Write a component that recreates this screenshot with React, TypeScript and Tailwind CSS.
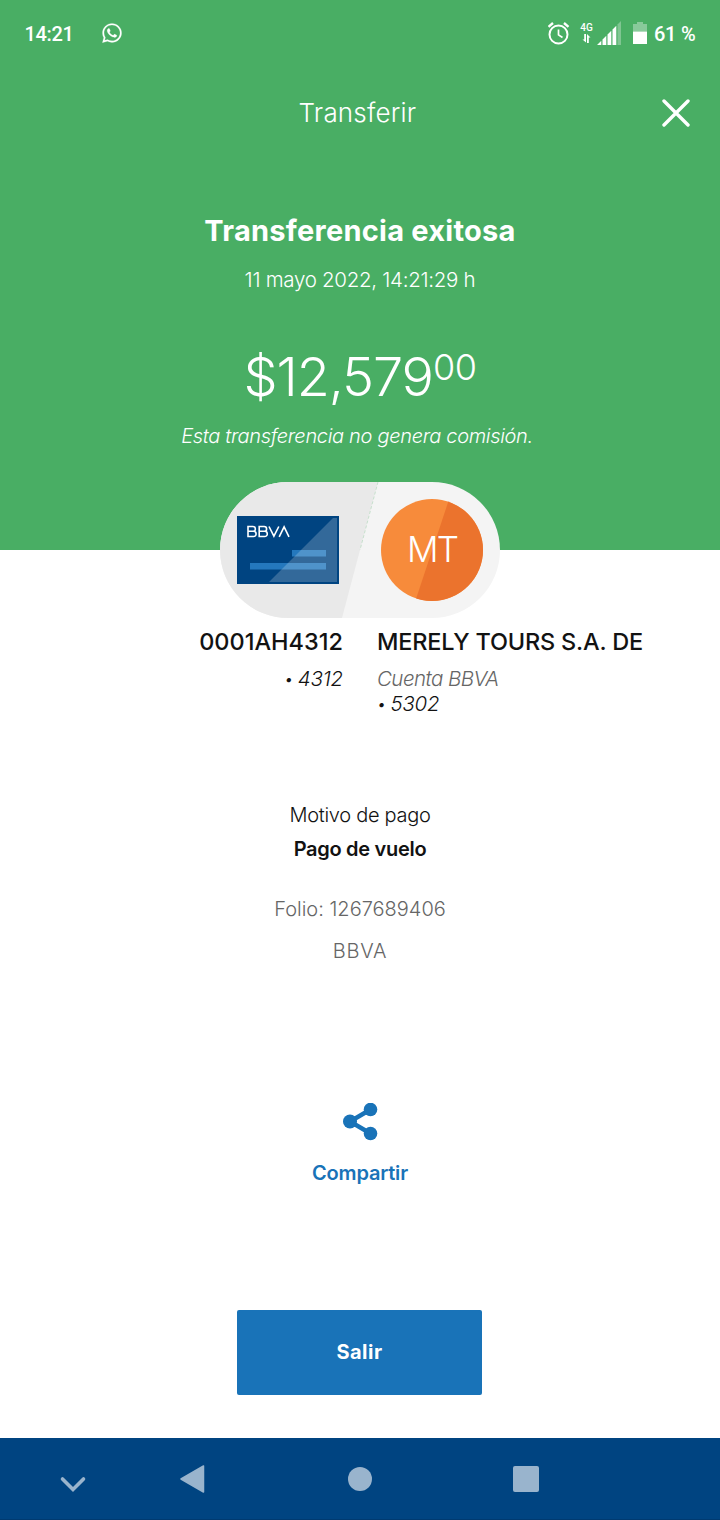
import { FC } from 'react';
import { FaWhatsapp } from 'react-icons/fa';

const StatusBar: FC = () => (
  <div className="flex h-[68px] items-center justify-between pr-[25px] pl-[24px] font-[Roboto,sans-serif] text-[20px] font-medium">
    <div className="flex items-center gap-[28px]">
      <span className="w-[50px] tracking-[-0.3px] whitespace-nowrap">14:21</span>
      <FaWhatsapp className="h-[22px] w-[20px] -translate-y-px stroke-current stroke-[4]" />
    </div>
    <div className="flex items-center">
      <svg className="h-[24px] w-[22px]" viewBox="0 0 22 24" fill="none" stroke="currentColor">
        <circle cx="10.500" cy="12.500" r="9" strokeWidth="2" />
        <path d="M10.500 7.500v5.400l4 2.600" strokeWidth="1.700" />
        <path d="M0.500 4.800 5 1M20.500 4.800 16 1" strokeWidth="2.400" />
      </svg>
      <div className="ml-[10px] flex w-[13px] -translate-y-[2px] flex-col items-center">
        <span className="text-[10px] leading-[12px] font-medium">4G</span>
        <svg className="h-[9px] w-[9px]" viewBox="0 0 9 9" fill="currentColor">
          <path d="M2.200 0H4v8.500L0.500 5.500h1.700zM5 0l3.500 3.500H6.800V9H5z" />
        </svg>
      </div>
      <svg className="ml-[4px] h-[24px] w-[24px] -translate-y-px" viewBox="0 0 24 24" fill="currentColor">
        <path d="M0 24 4.300 19.700V24zM5.500 18.500 9.300 14.700V24H5.500zM10.500 13.500l3.800-3.800V24h-3.800zM15.500 8.500l3.800-3.800V24h-3.800z" />
        <path d="M20.500 3.500 24 0v24h-3.500z" opacity="0.3" />
      </svg>
      <svg className="ml-[12px] h-[22px] w-[14px] -translate-y-px" viewBox="0 0 14 22" fill="currentColor">
        <path d="M4 0h6v2h4v7.500H0V2h4z" opacity="0.35" />
        <path d="M0 9.500h14V22H0z" />
      </svg>
      <span className="ml-[7px] w-[41px] tracking-[-0.25px] whitespace-nowrap">61 %</span>
    </div>
  </div>
);

const AccountsBadge: FC = () => (
  <svg className="mx-auto h-[136px] w-[280px]" viewBox="0 0 280 136">
    <defs>
      <clipPath id="pill">
        <rect width="280" height="136" rx="68" />
      </clipPath>
      <clipPath id="avatar">
        <circle cx="212" cy="68" r="51" />
      </clipPath>
    </defs>
    <g clipPath="url(#pill)">
      <path d="M0 0h280v136H0z" fill="#f4f4f4" />
      <path d="M0 0h158L122 136H0z" fill="#e9e9e9" />
      <path d="M158 0 140 68" stroke="#bcdcc4" strokeWidth="0.8" strokeDasharray="3 2" />
    </g>
    <path d="M17 34h102v68H17z" fill="#004481" />
    <path d="M72 68h34v6.500H72zM30 81h76v6.500H30z" fill="#2478bd" />
    <path d="M117 36v64H49l64-64z" fill="#fff" opacity="0.2" />
    <path
      d="M28 44.500v10h5.500a2.600 2.600 0 0 0 0-5.200H28h5a2.400 2.400 0 0 0 0-4.800zM39.200 44.500v10h5.500a2.600 2.600 0 0 0 0-5.200h-5.500h5a2.400 2.400 0 0 0 0-4.800zM49 44.500l4.900 9.700 4.900-9.700M59.200 54.800l4.900-9.900 4.900 9.900"
      fill="none"
      stroke="#fff"
      strokeWidth="1.600"
    />
    <g clipPath="url(#avatar)">
      <path d="M160 16h104v104H160z" fill="#f78b3b" />
      <path d="M229.500 16H264v104h-69z" fill="#eb732d" />
    </g>
    <text
      x="213"
      y="80"
      textAnchor="middle"
      textLength="52"
      className="fill-white font-[Inter,sans-serif] text-[35px] font-light"
    >
      MT
    </text>
  </svg>
);

const NavBar: FC = () => (
  <nav className="h-[82px] border-b border-[#003a70] bg-[#004481] text-[#99b4cd]">
    <svg className="h-[81px] w-[720px]" viewBox="0 0 720 81" fill="currentColor">
      <path
        d="m62.500 41 10.500 10.500L83.500 41"
        fill="none"
        stroke="currentColor"
        strokeWidth="3.600"
        strokeLinecap="round"
      />
      <path d="M181 41 203.500 28v26z" stroke="currentColor" strokeWidth="1.500" strokeLinejoin="round" />
      <circle cx="360" cy="41" r="12" />
      <rect x="513" y="28" width="26" height="26" rx="2" />
    </svg>
  </nav>
);

const App: FC = () => {
  return (
    <div className="flex h-[1520px] w-[720px] flex-col overflow-hidden bg-white font-[Inter,sans-serif] whitespace-nowrap text-[#121212]">
      <header className="h-[550px] shrink-0 bg-[#49ae64] text-center text-white">
        <StatusBar />
        <div className="grid h-[90px] grid-cols-[1fr_auto_1fr] items-center pr-[30px] pl-[25px]">
          <h1 className="col-start-2 pb-[2px] text-[26px] font-light tracking-[0.2px]">Transferir</h1>
          <svg className="h-[28px] w-[28px] justify-self-end" viewBox="0 0 28 28" fill="none">
            <path d="M2 2 26 26M26 2 2 26" stroke="currentColor" strokeWidth="3.400" strokeLinecap="round" />
          </svg>
        </div>
        <h2 className="mt-[53px] text-[29px] leading-[40px] font-bold tracking-[0.25px]">Transferencia exitosa</h2>
        <p className="mt-[9px] text-[20.500px] leading-[40px] font-light tracking-[-0.28px]">
          11 mayo 2022, 14:21:29 h
        </p>
        <p className="mt-[41px] flex h-[72px] items-start justify-center font-[275]">
          <span className="text-[54px] leading-[72px] tracking-[-1.100px]">$12,579</span>
          <span className="text-[36px] leading-[52px] tracking-[-0.5px]">00</span>
        </p>
        <p className="mt-[7px] pr-[6px] text-[20px] leading-[32px] font-light tracking-[-0.32px] italic">
          Esta transferencia no genera comisión.
        </p>
      </header>

      <main className="-mt-[68px] flex grow flex-col text-center">
        <AccountsBadge />
        <div className="mt-[6px] grid grid-cols-[343px_1fr] gap-x-[34px]">
          <div className="text-right">
            <p className="text-[23.500px] leading-[36px] font-medium">0001AH4312</p>
            <p className="mt-[6px] text-[20.500px] leading-[25px] font-light tracking-[-0.2px] italic [word-spacing:-1px]">
              <span className="align-[1px] text-[16px] leading-none">•</span> 4312
            </p>
          </div>
          <div className="text-left">
            <p className="text-[23.500px] leading-[36px] font-medium tracking-[-0.18px]">MERELY TOURS S.A. DE</p>
            <p className="mt-[6px] text-[20.500px] leading-[25px] font-light tracking-[-0.55px] text-[#666666] italic">
              Cuenta BBVA
            </p>
            <p className="text-[20.500px] leading-[25px] font-light tracking-[-0.2px] italic [word-spacing:-1px]">
              <span className="align-[1px] text-[16px] leading-none">•</span> 5302
            </p>
          </div>
        </div>

        <div className="mt-[82px] text-[20px] leading-[34px] tracking-[-0.3px]">
          <p className="font-light">Motivo de pago</p>
          <p className="font-semibold">Pago de vuelo</p>
        </div>
        <div className="mt-[22px] text-[20px] leading-[42px] font-light text-[#666666]">
          <p>Folio: 1267689406</p>
          <p className="tracking-[0.7px]">BBVA</p>
        </div>

        <button className="mt-[131px] flex flex-col items-center text-[#1973b8]">
          <svg className="h-[38px] w-[36px]" viewBox="0 0 36 38" fill="currentColor">
            <path d="M28.500 6.500 8 18.500l20.500 12" fill="none" stroke="currentColor" strokeWidth="4.400" />
            <circle cx="28.500" cy="6.500" r="6.800" />
            <circle cx="8" cy="18.500" r="7" />
            <circle cx="28.500" cy="30.500" r="6.800" />
          </svg>
          <span className="mt-[17px] text-[20px] leading-[30px] font-semibold tracking-[-0.2px]">Compartir</span>
        </button>

        <button className="mt-[122px] ml-[237px] h-[85px] w-[245px] rounded-[2px] bg-[#1973b8] pb-[2px] text-[20px] font-bold tracking-[0.5px] text-white">
          Salir
        </button>
      </main>

      <NavBar />
    </div>
  );
};

export default App;
